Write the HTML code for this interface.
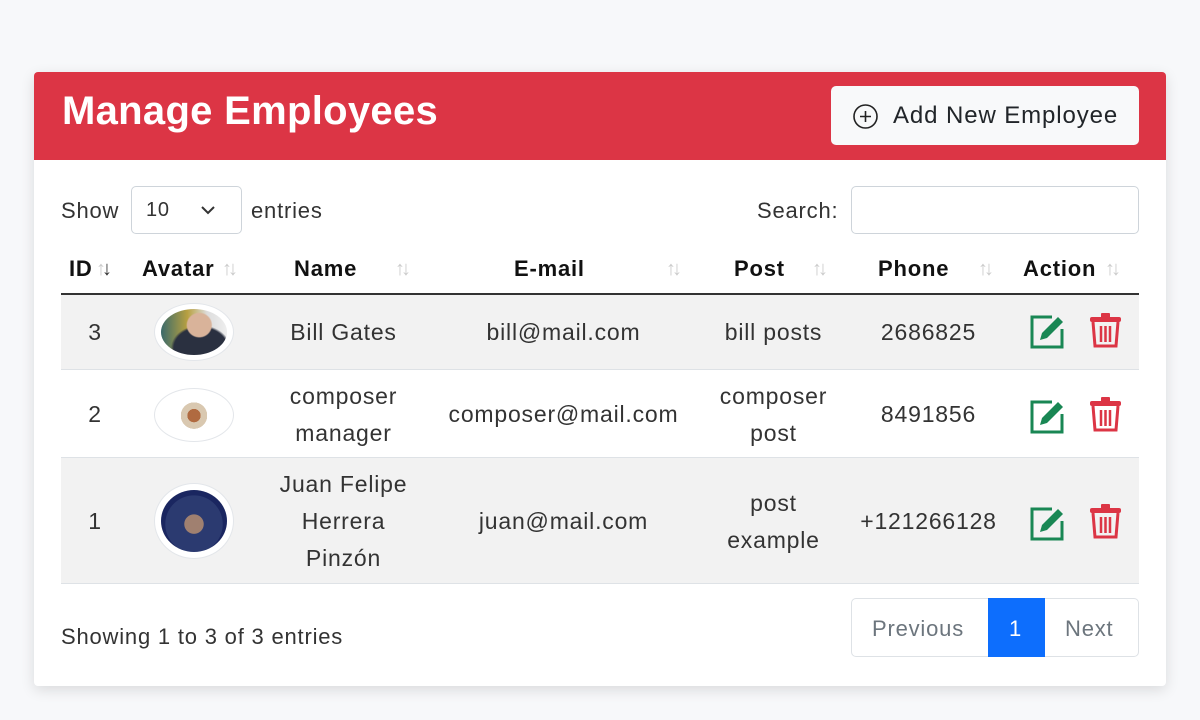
<!DOCTYPE html>
<html><head><style>
*{margin:0;padding:0;box-sizing:border-box}
body{width:1200px;height:720px;background:#f7f8fa;font-family:"Liberation Sans",sans-serif;color:#212529;position:relative;overflow:hidden;letter-spacing:0.8px}
.card{position:absolute;left:34px;top:72px;width:1132px;height:614px;background:#fff;border-radius:4px;box-shadow:0 4px 14px rgba(0,0,0,.12)}
.hdr{position:absolute;left:34px;top:72px;width:1132px;height:88px;background:#dc3545;border-radius:4px 4px 0 0}
.a{position:absolute;white-space:nowrap}
.c{position:absolute;text-align:center;font-size:23px;line-height:37px;color:#333;white-space:nowrap}
.th{position:absolute;top:256px;font-size:22px;font-weight:bold;color:#111}
.ar{position:absolute;top:258px;font-size:20px;color:#ccc;letter-spacing:-4px}
</style></head><body>
<div class="card"></div>
<div class="hdr"></div>
<div class="a" style="left:62px;top:89px;font-size:40px;font-weight:bold;color:#fff;letter-spacing:0.3px">Manage Employees</div>
<div class="a" style="left:831px;top:86px;width:308px;height:59px;background:#f8f9fa;border-radius:5px"></div>
<svg class="a" style="left:852px;top:103px" width="27" height="27" viewBox="0 0 27 27"><circle cx="13.5" cy="13.5" r="11.5" fill="none" stroke="#222" stroke-width="1.6"/><path d="M13.5 8v11M8 13.5h11" stroke="#222" stroke-width="1.6"/></svg>
<div class="a" style="left:893px;top:102px;font-size:24px;color:#212529;letter-spacing:0.9px">Add New Employee</div>

<div class="a" style="left:61px;top:198px;font-size:22px;color:#333">Show</div>
<div class="a" style="left:131px;top:186px;width:111px;height:48px;border:1px solid #ced4da;border-radius:5px"></div>
<div class="a" style="left:146px;top:199px;font-size:20px;color:#333">10</div>
<svg class="a" style="left:200px;top:204px" width="16" height="12"><path d="M2 3l6 6 6-6" fill="none" stroke="#333" stroke-width="2"/></svg>
<div class="a" style="left:251px;top:198px;font-size:22px;color:#333">entries</div>
<div class="a" style="left:757px;top:198px;font-size:22px;color:#333">Search:</div>
<div class="a" style="left:851px;top:186px;width:288px;height:48px;border:1px solid #ced4da;border-radius:5px"></div>

<div class="th" style="left:69px">ID</div><div class="ar" style="left:96px">↑<span style="color:#333">↓</span></div>
<div class="th" style="left:142px">Avatar</div><div class="ar" style="left:222px">↑↓</div>
<div class="th" style="left:294px">Name</div><div class="ar" style="left:395px">↑↓</div>
<div class="th" style="left:514px">E-mail</div><div class="ar" style="left:666px">↑↓</div>
<div class="th" style="left:734px">Post</div><div class="ar" style="left:812px">↑↓</div>
<div class="th" style="left:878px">Phone</div><div class="ar" style="left:978px">↑↓</div>
<div class="th" style="left:1023px">Action</div><div class="ar" style="left:1105px">↑↓</div>

<div class="a" style="left:61px;top:293px;width:1078px;height:2px;background:#333"></div>
<div class="a" style="left:61px;top:295px;width:1078px;height:75px;background:#f2f2f2;border-bottom:1px solid #dee2e6"></div>
<div class="a" style="left:61px;top:370px;width:1078px;height:88px;background:#fff;border-bottom:1px solid #dee2e6"></div>
<div class="a" style="left:61px;top:458px;width:1078px;height:126px;background:#f2f2f2;border-bottom:1px solid #dee2e6"></div>

<!-- row 1 -->
<div class="c" style="left:62px;width:66px;top:314px">3</div>
<div class="a" style="left:154px;top:303px;width:80px;height:58px;border-radius:50%;background:#fff;border:1px solid #e3e6ea"></div>
<div class="a" style="left:161px;top:309px;width:66px;height:46px;border-radius:50%;background:radial-gradient(ellipse 20% 28% at 58% 35%,#d9b39a 0 90%,transparent 100%),radial-gradient(ellipse 45% 50% at 60% 85%,#2a3040 0 90%,transparent 100%),linear-gradient(90deg,#3a6a6a,#b8a040 40%,#ddd 70%,#eee)"></div>
<div class="c" style="left:262px;width:163px;top:314px">Bill Gates</div>
<div class="c" style="left:425px;width:277px;top:314px">bill@mail.com</div>
<div class="c" style="left:702px;width:143px;top:314px">bill posts</div>
<div class="c" style="left:845px;width:167px;top:314px">2686825</div>
<!-- row 2 -->
<div class="c" style="left:62px;width:66px;top:396px">2</div>
<div class="a" style="left:154px;top:388px;width:80px;height:54px;border-radius:50%;background:#fff;border:1px solid #e3e6ea"></div>
<div class="a" style="left:181px;top:398px;width:26px;height:32px;background:radial-gradient(circle at 50% 55%,#b06a40 0 30%,#d9c8b0 31% 60%,#fff 61%)"></div>
<div class="c" style="left:262px;width:163px;top:378px">composer<br>manager</div>
<div class="c" style="left:425px;width:277px;top:396px">composer@mail.com</div>
<div class="c" style="left:702px;width:143px;top:378px">composer<br>post</div>
<div class="c" style="left:845px;width:167px;top:396px">8491856</div>
<!-- row 3 -->
<div class="c" style="left:62px;width:66px;top:503px">1</div>
<div class="a" style="left:154px;top:483px;width:80px;height:76px;border-radius:50%;background:#fff;border:1px solid #e3e6ea"></div>
<div class="a" style="left:161px;top:490px;width:66px;height:62px;border-radius:50%;background:radial-gradient(circle at 50% 55%,#a08070 0 20%,#2b3a70 21% 60%,#1a2660 61%)"></div>
<div class="c" style="left:262px;width:163px;top:466px">Juan Felipe<br>Herrera<br>Pinzón</div>
<div class="c" style="left:425px;width:277px;top:503px">juan@mail.com</div>
<div class="c" style="left:702px;width:143px;top:485px">post<br>example</div>
<div class="c" style="left:845px;width:167px;top:503px">+121266128</div>

<!-- icons -->
<svg class="a" style="left:1030px;top:313px" width="36" height="36" viewBox="0 0 36 36"><path d="M22 4H2v30h30V16" fill="none" stroke="#198754" stroke-width="3"/><path d="M10 27l2-7 16-16 5 5-16 16z" fill="#198754"/></svg>
<svg class="a" style="left:1089px;top:312px" width="33" height="37" viewBox="0 0 33 37"><rect x="1" y="5" width="31" height="5" rx="2" fill="#dc3545"/><rect x="12" y="1" width="9" height="5" rx="1" fill="#dc3545"/><path d="M4 10l2 24h21l2-24" fill="none" stroke="#dc3545" stroke-width="3"/><path d="M12 14v16M16.5 14v16M21 14v16" stroke="#dc3545" stroke-width="2.5"/></svg>
<svg class="a" style="left:1030px;top:398px" width="36" height="36" viewBox="0 0 36 36"><path d="M22 4H2v30h30V16" fill="none" stroke="#198754" stroke-width="3"/><path d="M10 27l2-7 16-16 5 5-16 16z" fill="#198754"/></svg>
<svg class="a" style="left:1089px;top:396px" width="33" height="37" viewBox="0 0 33 37"><rect x="1" y="5" width="31" height="5" rx="2" fill="#dc3545"/><rect x="12" y="1" width="9" height="5" rx="1" fill="#dc3545"/><path d="M4 10l2 24h21l2-24" fill="none" stroke="#dc3545" stroke-width="3"/><path d="M12 14v16M16.5 14v16M21 14v16" stroke="#dc3545" stroke-width="2.5"/></svg>
<svg class="a" style="left:1030px;top:505px" width="36" height="36" viewBox="0 0 36 36"><path d="M22 4H2v30h30V16" fill="none" stroke="#198754" stroke-width="3"/><path d="M10 27l2-7 16-16 5 5-16 16z" fill="#198754"/></svg>
<svg class="a" style="left:1089px;top:503px" width="33" height="37" viewBox="0 0 33 37"><rect x="1" y="5" width="31" height="5" rx="2" fill="#dc3545"/><rect x="12" y="1" width="9" height="5" rx="1" fill="#dc3545"/><path d="M4 10l2 24h21l2-24" fill="none" stroke="#dc3545" stroke-width="3"/><path d="M12 14v16M16.5 14v16M21 14v16" stroke="#dc3545" stroke-width="2.5"/></svg>

<div class="a" style="left:61px;top:624px;font-size:22px;color:#333">Showing 1 to 3 of 3 entries</div>
<div class="a" style="left:851px;top:598px;width:288px;height:59px;border:1px solid #dee2e6;border-radius:5px;background:#fff"></div>
<div class="a" style="left:988px;top:598px;width:57px;height:59px;background:#0d6efd"></div>
<div class="a" style="left:872px;top:616px;font-size:22px;color:#6c757d">Previous</div>
<div class="a" style="left:1009px;top:616px;font-size:22px;color:#fff">1</div>
<div class="a" style="left:1065px;top:616px;font-size:22px;color:#6c757d">Next</div>
</body></html>
